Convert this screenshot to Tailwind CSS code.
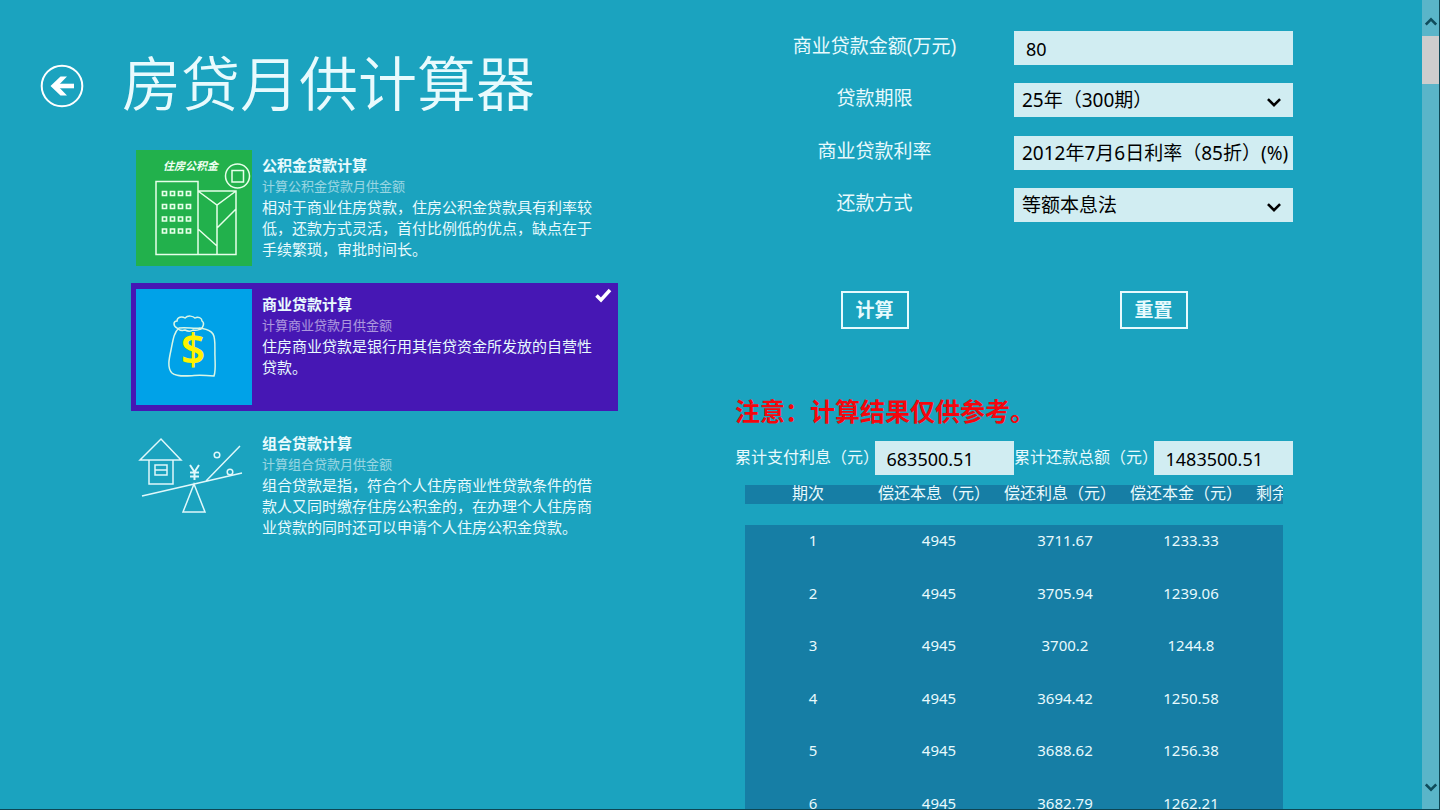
<!DOCTYPE html>
<html lang="zh-CN">
<head>
  <meta charset="UTF-8">
  <meta name="viewport" content="width=device-width, initial-scale=1.0">
  <title>房贷月供计算器</title>
  <script src="https://cdn.jsdelivr.net/npm/@tailwindcss/browser@4"></script>
</head>
<body class="bg-[#1ba3bf] text-[#e8fafd] font-['Noto_Sans','Noto_Sans_CJK_SC',sans-serif]">
<div class="flex h-screen overflow-hidden border-r border-b border-[#0d4654]">

  <!-- Left: title and loan types -->
  <section class="flex-1 min-w-0">
    <header class="flex items-center pl-10 pt-[42px] h-[130px]">
      <button type="button" aria-label="返回" class="shrink-0">
        <svg class="w-11 h-11" viewBox="0 0 44 44" fill="none">
          <circle cx="22" cy="22" r="20.3" stroke="#fff" stroke-width="2"/>
          <path d="M34 22H14.5" stroke="#fff" stroke-width="4.6"/>
          <path d="M20.5 12.500h6.500L17.800 22l9.200 9.500h-6.500L10.500 22z" fill="#fff"/>
        </svg>
      </button>
      <h1 class="ml-[38px] pb-1.5 text-[59px] leading-[60px] font-[350] whitespace-nowrap">房贷月供计算器</h1>
    </header>

    <ul class="mt-[14px] ml-[131px] w-[487px] flex flex-col gap-[11px]">
      <li class="flex h-32 py-1.5 px-[5px] gap-[10px]">
        <div class="w-[116px] h-[116px] shrink-0 bg-[#22b14c]">
          <svg class="w-full h-full" viewBox="0 0 116 116" fill="none" stroke="#e6ffe9" stroke-width="1.5">
            <text x="27" y="20" font-size="11" font-weight="700" font-style="italic" fill="#f0fff2" stroke="none">住房公积金</text>
            <circle cx="101.500" cy="26" r="12"/>
            <path d="M96 20.500h11.500v11.500H96z"/>
            <path d="M20 31.500h42v73H20zM62 41h38v63.500H62M100 41v63.500M62 41l19 14 19-14M81 55v49.500M81 78l19-19M62 79l19 17"/>
            <g stroke-width="1.700">
              <path d="M26.500 41.500h4v4h-4zM34.500 41.500h4v4h-4zM42.500 41.500h4v4h-4zM50.500 41.500h4v4h-4z"/>
              <path d="M26.500 54.500h4v4h-4zM34.500 54.500h4v4h-4zM42.500 54.500h4v4h-4zM50.500 54.500h4v4h-4z"/>
              <path d="M26.500 67h4v4h-4zM34.500 67h4v4h-4zM42.500 67h4v4h-4zM50.500 67h4v4h-4z"/>
              <path d="M26.500 79h4v4h-4zM34.500 79h4v4h-4zM42.500 79h4v4h-4zM50.500 79h4v4h-4z"/>
            </g>
          </svg>
        </div>
        <div class="w-[344px] pt-[5px] leading-[21px] text-[15px]">
          <h2 class="font-bold">公积金贷款计算</h2>
          <p class="text-[13px] leading-[21px] text-white/55">计算公积金贷款月供金额</p>
          <p>相对于商业住房贷款，住房公积金贷款具有利率较低，还款方式灵活，首付比例低的优点，缺点在于手续繁琐，审批时间长。</p>
        </div>
      </li>

      <li class="relative flex h-32 py-1.5 px-[5px] gap-[10px] bg-[#4617b4]">
        <div class="w-[116px] h-[116px] shrink-0 bg-[#00a2e8]">
          <svg class="w-full h-full" viewBox="0 0 116 116" fill="none">
            <path d="M41 39c-4-2-4-7 0-7 0-4 5-5 8-3 3-3 8-2 10 0 3-2 7 0 7 3 3 2 1 6-1 8-3 1-5 2-8 1-3 2-6 1-8 0-3 1-6 0-8-2z" stroke="#d9f6e6" stroke-width="1.500"/>
            <path d="M43 39c-5 4-6 12-8 22-2 9-4 18 1 23 5 4 14 3 22 2.500 7-.5 14 0 20 .5 2-6 1-13 1-19-.5-9 1-18-2-23-3-5-8-5-13-6-6 1-13-1-21 0z" stroke="#d9f6e6" stroke-width="1.500"/>
            <text x="57" y="76" font-size="43" font-weight="600" text-anchor="middle" fill="#fff200">$</text>
          </svg>
        </div>
        <div class="w-[344px] pt-[5px] leading-[21px] text-[15px]">
          <h2 class="font-bold">商业贷款计算</h2>
          <p class="text-[13px] leading-[21px] text-white/55">计算商业贷款月供金额</p>
          <p>住房商业贷款是银行用其信贷资金所发放的自营性贷款。</p>
        </div>
        <svg class="absolute top-1 right-1.5 w-[18px] h-[18px]" viewBox="0 0 18 18" fill="none" stroke="#fff" stroke-width="3.500"><path d="M2.500 8.500l4.500 4.500 9-10"/></svg>
      </li>

      <li class="flex h-32 py-1.5 px-[5px] gap-[10px]">
        <div class="w-[116px] h-[116px] shrink-0">
          <svg class="w-full h-full" viewBox="0 0 116 116" fill="none" stroke="#e0f8fb" stroke-width="1.500">
            <path d="M4 32L25 11l20 21zM13 32v24h24V32M19 37h12v10H19zM19 42h12"/>
            <path d="M6 68L106 45M70 53l34-35M58 56L47 84h22z"/>
            <circle cx="81" cy="27" r="2.800"/>
            <circle cx="94" cy="44" r="2.800"/>
            <path d="M54 37l4.500 7L63 37M58.500 44V52M54 44.500h9M54 48.500h9" stroke-width="2"/>
          </svg>
        </div>
        <div class="w-[344px] pt-[5px] leading-[21px] text-[15px]">
          <h2 class="font-bold">组合贷款计算</h2>
          <p class="text-[13px] leading-[21px] text-white/55">计算组合贷款月供金额</p>
          <p>组合贷款是指，符合个人住房商业性贷款条件的借款人又同时缴存住房公积金的，在办理个人住房商业贷款的同时还可以申请个人住房公积金贷款。</p>
        </div>
      </li>
    </ul>
  </section>

  <!-- Right: form and results -->
  <section class="w-[558px] shrink-0 mr-[129px] pt-[31px]">
    <form>
      <div class="grid grid-cols-2 content-between h-[191px] text-[19px] leading-[30px]">
        <label for="amount" class="text-center">商业贷款金额(万元)</label>
        <input id="amount" type="text" value="80" class="w-full h-[34px] px-3 pt-0.5 bg-[#d1edf2] text-black text-[18px]">

        <label for="term" class="text-center">贷款期限</label>
        <div class="relative">
          <select id="term" class="block appearance-none w-full h-[34px] pl-2 bg-[#d1edf2] text-black text-[19px]">
            <option>25年（300期）</option>
          </select>
          <svg class="absolute right-3 top-3 w-3.5 h-3.5 pointer-events-none" viewBox="0 0 12 12" fill="none" stroke="#000" stroke-width="2.200"><path d="M.8 3.500L6 8.700l5.200-5.200"/></svg>
        </div>

        <label for="rate" class="text-center">商业贷款利率</label>
        <select id="rate" class="block appearance-none w-full h-[34px] pl-2 bg-[#d1edf2] text-black">
          <option>2012年7月6日利率（85折）(%)</option>
        </select>

        <label for="method" class="text-center">还款方式</label>
        <div class="relative">
          <select id="method" class="block appearance-none w-full h-[34px] pl-2 bg-[#d1edf2] text-black">
            <option>等额本息法</option>
          </select>
          <svg class="absolute right-3 top-3 w-3.5 h-3.5 pointer-events-none" viewBox="0 0 12 12" fill="none" stroke="#000" stroke-width="2.200"><path d="M.8 3.500L6 8.700l5.200-5.200"/></svg>
        </div>
      </div>

      <div class="mt-[69px] grid grid-cols-2 justify-items-center text-[19px] font-bold">
        <button type="button" class="w-[68px] h-[38px] border-2 border-[#e8fafd] leading-8">计算</button>
        <button type="reset" class="w-[68px] h-[38px] border-2 border-[#e8fafd] leading-8">重置</button>
      </div>
    </form>

    <p class="mt-[63px] text-[25px] leading-[38px] font-bold text-[#f5060d]">注意：计算结果仅供参考。</p>

    <div class="mt-[11px] grid grid-cols-4 leading-8 whitespace-nowrap">
      <label for="interest" class="min-w-0">累计支付利息（元）</label>
      <input id="interest" type="text" readonly value="683500.51" class="w-full min-w-0 h-[34px] px-3 pt-0.5 bg-[#d1edf2] text-black text-[18px]">
      <label for="total" class="min-w-0">累计还款总额（元）</label>
      <input id="total" type="text" readonly value="1483500.51" class="w-full min-w-0 h-[34px] px-3 pt-0.5 bg-[#d1edf2] text-black text-[18px]">
    </div>

    <table class="block mt-[10px] mx-[10px] overflow-x-clip text-center whitespace-nowrap">
      <thead class="block bg-[#167ea5]">
        <tr class="grid grid-cols-[repeat(5,126px)] h-[19px] leading-[17px]">
          <th class="font-normal">期次</th>
          <th class="font-normal">偿还本息（元）</th>
          <th class="font-normal">偿还利息（元）</th>
          <th class="font-normal">偿还本金（元）</th>
          <th class="font-normal">剩余本金（元）</th>
        </tr>
      </thead>
      <tbody class="mt-[21px] grid grid-rows-6 h-[315px] bg-[#167ea5] text-[15px] leading-[30px]">
        <tr class="grid grid-cols-[repeat(4,126px)] pl-[5px]"><td>1</td><td>4945</td><td>3711.67</td><td>1233.33</td></tr>
        <tr class="grid grid-cols-[repeat(4,126px)] pl-[5px]"><td>2</td><td>4945</td><td>3705.94</td><td>1239.06</td></tr>
        <tr class="grid grid-cols-[repeat(4,126px)] pl-[5px]"><td>3</td><td>4945</td><td>3700.2</td><td>1244.8</td></tr>
        <tr class="grid grid-cols-[repeat(4,126px)] pl-[5px]"><td>4</td><td>4945</td><td>3694.42</td><td>1250.58</td></tr>
        <tr class="grid grid-cols-[repeat(4,126px)] pl-[5px]"><td>5</td><td>4945</td><td>3688.62</td><td>1256.38</td></tr>
        <tr class="grid grid-cols-[repeat(4,126px)] pl-[5px]"><td>6</td><td>4945</td><td>3682.79</td><td>1262.21</td></tr>
      </tbody>
    </table>
  </section>

  <!-- Scrollbar -->
  <div class="w-[17px] shrink-0 flex flex-col bg-[#5ab5c9]">
    <button type="button" aria-label="向上滚动" class="h-9 pt-2 flex items-center justify-center">
      <svg class="w-3 h-3" viewBox="0 0 12 12" fill="none" stroke="#0f4c5c" stroke-width="2.600"><path d="M.8 8.500L6 3.300l5.200 5.200"/></svg>
    </button>
    <div class="h-12 bg-[#cdcdcd]"></div>
    <button type="button" aria-label="向下滚动" class="mt-auto h-9 pb-2 flex items-center justify-center">
      <svg class="w-3 h-3" viewBox="0 0 12 12" fill="none" stroke="#0f4c5c" stroke-width="2.600"><path d="M.8 3.500L6 8.700l5.200-5.200"/></svg>
    </button>
  </div>
</div>
</body>
</html>
